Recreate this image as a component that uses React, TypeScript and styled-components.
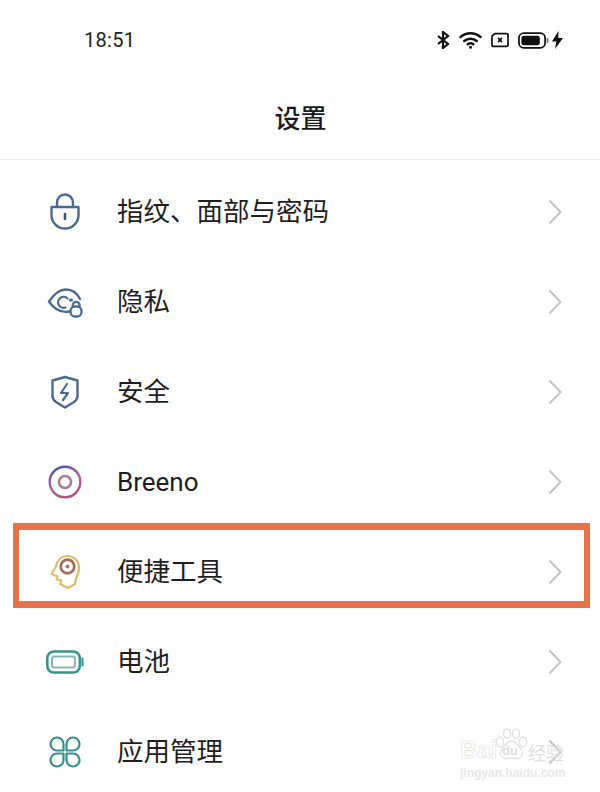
import React from "react";
import styled, { createGlobalStyle } from "styled-components";

const GlobalStyle = createGlobalStyle`
  html, body {
    margin: 0;
    padding: 0;
    background: #fff;
  }
  body {
    font-family: "Liberation Sans", "Noto Sans CJK SC", sans-serif;
  }
`;

const LockIcon = () => (
  <svg width="32" height="38" viewBox="0 0 32 38" fill="none" stroke="#4a6a90" strokeWidth="2.4" strokeLinecap="round">
    <path d="M8 14V9.500a8 8 0 0 1 16 0V14" />
    <path d="M2.500 14h27v8a13.500 13.500 0 0 1-27 0z" strokeLinejoin="round" />
    <path d="M16 21v5" strokeWidth="2.6" stroke="#3d5573" />
  </svg>
);

const EyeLockIcon = () => (
  <svg width="36" height="32" viewBox="0 0 36 32" fill="none" stroke="#4a6a90" strokeWidth="2.3" strokeLinecap="round">
    <path d="M22 25.500C13 27 6 21.500 2 15.500 7 8 13 3.500 19 3.500c6 0 11 3.500 14 9.500" />
    <path d="M20.500 12.500a5.500 5.500 0 1 0-2 9" />
    <path d="M23.500 14h1" strokeWidth="3.200" />
    <rect x="23.500" y="20.500" width="11" height="10" rx="4.500" />
    <path d="M25.800 20.500v-1.300a3.400 3.400 0 0 1 6.800 0v1.300" />
  </svg>
);

const ShieldIcon = () => (
  <svg width="30" height="34" viewBox="0 0 30 34" fill="none" stroke="#4a6a90" strokeWidth="2.4" strokeLinejoin="round">
    <path d="M15 2l12.500 3.500V21c0 3-1.500 4.500-3.500 6l-9 5.500L6 27c-2-1.500-3.500-3-3.500-6V5.500z" />
    <path d="M17 9l-6 9h7l-5 7" strokeWidth="2.200" strokeLinecap="round" />
  </svg>
);

const BreenoIcon = () => (
  <svg width="34" height="34" viewBox="0 0 34 34" fill="none" strokeWidth="2.4">
    <defs>
      <linearGradient id="breenoRing" x1="0.3" y1="0" x2="0.7" y2="1">
        <stop offset="0" stopColor="#4f52a6" />
        <stop offset="0.5" stopColor="#b25fa8" />
        <stop offset="1" stopColor="#a8527a" />
      </linearGradient>
    </defs>
    <circle cx="17" cy="17" r="15.300" stroke="url(#breenoRing)" />
    <circle cx="17" cy="17" r="6" stroke="#a0808f" strokeWidth="2.600" />
  </svg>
);

const HeadIcon = () => (
  <svg width="32" height="36" viewBox="0 0 32 36" fill="none">
    <path
      d="M19 34l-8-4 1.500-3.500-5-1 1-3L2.500 20 7 12.500C8 6 12.500 2 18.500 2 25 2 30 7 30 13.500c0 4-1 7.500-3 10.500l-1 6z"
      stroke="#e0bd6e"
      strokeWidth="2.200"
      strokeLinejoin="round"
    />
    <circle cx="18.500" cy="12.500" r="6.800" stroke="#a0705f" strokeWidth="2.800" />
    <circle cx="18.500" cy="12.500" r="2" fill="#b8705c" />
  </svg>
);

const BatteryIcon = () => (
  <svg width="38" height="24" viewBox="0 0 38 24" fill="none">
    <rect x="1.300" y="1.500" width="32.500" height="21" rx="6.500" stroke="#38928a" strokeWidth="2.600" />
    <rect x="6" y="6.500" width="23" height="11" rx="2.500" stroke="#84b8ac" strokeWidth="2" />
    <path d="M36.500 8.500v7" stroke="#38928a" strokeWidth="2" strokeLinecap="round" />
  </svg>
);

const AppsIcon = () => (
  <svg width="32" height="32" viewBox="0 0 32 32" fill="none" stroke="#38928a" strokeWidth="2.200" strokeLinejoin="round">
    <path d="M14.500 14.500H8a6.500 6.500 0 1 1 6.500-6.500z" />
    <path d="M17.500 14.500H24a6.500 6.500 0 1 0-6.500-6.500z" />
    <path d="M14.500 17.500H8a6.500 6.500 0 1 0 6.500 6.500z" />
    <path d="M17.500 17.500H24a6.500 6.500 0 1 1-6.500 6.500z" />
  </svg>
);

const BluetoothIcon = () => (
  <svg width="13" height="18" viewBox="0 0 13 18" fill="none" stroke="#111" strokeWidth="2.200">
    <path d="M1 5l10 8-5 4V1l5 4-10 8" />
  </svg>
);

const WifiIcon = () => (
  <svg width="23" height="18" viewBox="0 0 23 18" fill="none" stroke="#111" strokeWidth="2.400" strokeLinecap="round">
    <path d="M1.500 6C7.500 1 15.500 1 21.500 6" />
    <path d="M5.200 10c3.700-3 8.900-3 12.600 0" />
    <path d="M8.700 13.200c1.700-1.200 3.900-1.200 5.600 0" />
    <circle cx="11.500" cy="16.300" r="1.500" fill="#111" stroke="none" />
  </svg>
);

const SimIcon = () => (
  <svg width="18" height="16" viewBox="0 0 19 16" fill="none" stroke="#111">
    <path d="M4 1.200h12.500a1.500 1.500 0 0 1 1.500 1.500v10.600a1.500 1.500 0 0 1-1.500 1.500h-14A1.500 1.500 0 0 1 1 13.300V4z" strokeWidth="1.800" />
    <path d="M7.500 5.800l4 4.400M11.500 5.800l-4 4.400" strokeWidth="1.800" />
  </svg>
);

const StatusBattery = () => (
  <svg width="31" height="17" viewBox="0 0 32 17" fill="none">
    <rect x="1" y="1" width="27" height="15" rx="5" stroke="#111" strokeWidth="1.800" />
    <rect x="3.500" y="3.500" width="19" height="10" rx="2.500" fill="#111" />
    <path d="M30.500 6v5" stroke="#777" strokeWidth="1.800" />
  </svg>
);

const ChargeIcon = () => (
  <svg width="11" height="18" viewBox="0 0 11 18">
    <path d="M6.500 0L0 10.500h4.300L3 18l8-11H6.300z" fill="#111" />
  </svg>
);

const BaiduPaw = () => (
  <svg width="33" height="35" viewBox="0 0 33 35" fill="#fff" stroke="#e0e0e0" strokeWidth="1.300">
    <ellipse cx="5" cy="14" rx="3.500" ry="5" />
    <ellipse cx="12" cy="5.500" rx="3.500" ry="4.700" />
    <ellipse cx="21" cy="5.500" rx="3.500" ry="4.700" />
    <ellipse cx="28" cy="14" rx="3.500" ry="5" />
    <path d="M16.500 13c-4 0-6 4-9.500 8-3.500 5 0 10.500 5 9.500 3-.6 6-.6 9 0 5 1 8.500-4.500 5-9.500-3.500-4-5.500-8-9.500-8z" />
  </svg>
);

const items = [
  { label: "指纹、面部与密码", icon: <LockIcon /> },
  { label: "隐私", icon: <EyeLockIcon /> },
  { label: "安全", icon: <ShieldIcon /> },
  { label: "Breeno", icon: <BreenoIcon />, latin: true },
  { label: "便捷工具", icon: <HeadIcon /> },
  { label: "电池", icon: <BatteryIcon /> },
  { label: "应用管理", icon: <AppsIcon /> },
];

const App: React.FC = () => {
  return (
    <Screen>
      <GlobalStyle />
      <StatusBar>
        <Clock>18:51</Clock>
        <StatusIcons>
          <BluetoothIcon />
          <WifiIcon />
          <SimIcon />
          <BatteryGroup>
            <StatusBattery />
            <ChargeIcon />
          </BatteryGroup>
        </StatusIcons>
      </StatusBar>
      <Header>设置</Header>
      <List>
        {items.map((item, index) => (
          <Row key={index}>
            <IconSlot>{item.icon}</IconSlot>
            <Label $latin={item.latin}>{item.label}</Label>
            <Chevron width="14" height="26" viewBox="0 0 14 26" fill="none">
              <path d="M1.500 1.500L12.500 13 1.500 24.500" stroke="#c4c4c4" strokeWidth="2" />
            </Chevron>
          </Row>
        ))}
      </List>
      <Highlight />
      <Watermark>
        <WatermarkTop>
          <WatermarkBrand>Bai</WatermarkBrand>
          <PawWrap>
            <BaiduPaw />
            <PawText>du</PawText>
          </PawWrap>
          <WatermarkCn>经验</WatermarkCn>
        </WatermarkTop>
        <WatermarkUrl>jingyan.baidu.com</WatermarkUrl>
      </Watermark>
    </Screen>
  );
};

const Screen = styled.div`
  position: relative;
  width: 600px;
  height: 792px;
  overflow: hidden;
  background: #fff;
`;

const StatusBar = styled.div`
  display: flex;
  align-items: center;
  justify-content: space-between;
  height: 80px;
  padding: 0 37px 0 84px;
`;

const Clock = styled.div`
  font-size: 20px;
  color: #222;
  letter-spacing: 0.3px;
  font-family: "Roboto", "Liberation Sans", sans-serif;
`;

const StatusIcons = styled.div`
  display: flex;
  align-items: center;
  gap: 9px;
`;

const BatteryGroup = styled.div`
  display: flex;
  align-items: center;
  gap: 3px;
`;

const Header = styled.div`
  display: flex;
  align-items: center;
  justify-content: center;
  height: 73px;
  padding: 0 0 6px 1px;
  border-bottom: 1px solid #eeeeee;
  font-size: 26px;
  font-weight: 500;
  color: #1a1a1a;
  font-family: "Noto Sans CJK SC", sans-serif;
`;

const List = styled.div`
  display: flex;
  flex-direction: column;
  padding-top: 7px;
`;

const Row = styled.div`
  display: flex;
  align-items: center;
  height: 90px;
  padding: 0 38px 0 46px;
`;

const IconSlot = styled.div`
  display: flex;
  align-items: center;
  justify-content: center;
  width: 38px;
  margin-right: 33px;
`;

const Label = styled.div<{ $latin?: boolean }>`
  flex: 1;
  color: #1e1e1e;
  font-family: ${(p) => (p.$latin ? '"Roboto", "Noto Sans", sans-serif' : '"Noto Sans CJK SC", sans-serif')};
  font-size: ${(p) => (p.$latin ? "26px" : "26.500px")};
  padding-bottom: ${(p) => (p.$latin ? "0" : "5px")};
`;

const Chevron = styled.svg`
  flex: none;
`;

const Highlight = styled.div`
  position: absolute;
  left: 13px;
  top: 523px;
  width: 577px;
  height: 85px;
  box-sizing: border-box;
  border: solid #e8734a;
  border-width: 7px 6px 7px 6px;
  pointer-events: none;
`;

const Watermark = styled.div`
  position: absolute;
  left: 460px;
  top: 728px;
  width: 130px;
`;

const WatermarkTop = styled.div`
  display: flex;
  align-items: flex-end;
  height: 35px;
`;

const WatermarkBrand = styled.span`
  width: 35px;
  font-size: 24px;
  font-weight: 700;
  line-height: 26px;
  -webkit-text-stroke: 0.6px #e0e0e0;
  color: #fff;
`;

const PawWrap = styled.span`
  position: relative;
  display: inline-flex;
  height: 35px;
`;

const PawText = styled.span`
  position: absolute;
  left: 7px;
  bottom: 5px;
  font-size: 13px;
  font-weight: 700;
  color: #e0e0e0;
`;

const WatermarkCn = styled.span`
  font-size: 18px;
  line-height: 22px;
  color: #e0e0e0;
  font-family: "Noto Sans CJK SC", sans-serif;
`;

const WatermarkUrl = styled.div`
  margin-top: 3px;
  font-size: 12px;
  font-weight: 700;
  white-space: nowrap;
  color: #e8e8e8;
`;

export default App;
